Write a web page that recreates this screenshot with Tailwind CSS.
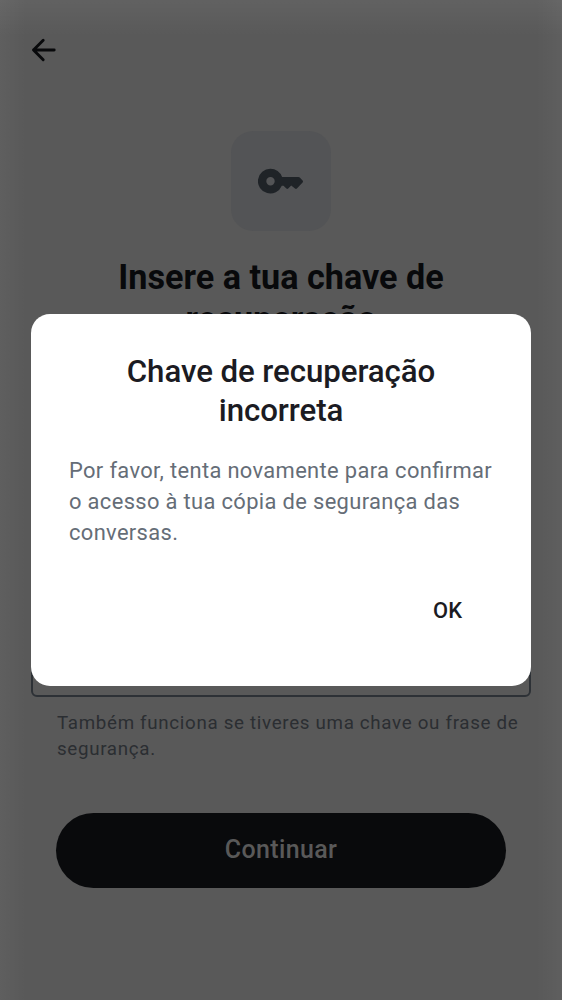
<!DOCTYPE html>
<html lang="pt">
<head>
<meta charset="utf-8">
<meta name="viewport" content="width=device-width, initial-scale=1">
<title>Chave de recuperação</title>
<script src="https://cdn.jsdelivr.net/npm/@tailwindcss/browser@4"></script>
</head>
<body class="relative h-[1000px] w-[562px] overflow-hidden bg-[#595959] bg-[linear-gradient(to_bottom,rgba(255,255,255,0.05),transparent_36px),linear-gradient(to_right,rgba(255,255,255,0.035),transparent_26px,transparent_536px,rgba(255,255,255,0.035))] font-[Roboto,sans-serif]">
<main class="flex h-full flex-col px-[31px]">
  <header class="flex h-[100px] items-center">
    <svg class="size-[26px]" viewBox="0 0 26 26" fill="none" stroke="#08090b" stroke-width="2.9" stroke-linecap="round" stroke-linejoin="round"><path d="M23.2 13H2.5M12.2 3.3L2.5 13L12.2 22.7"/></svg>
  </header>
  <div class="mt-[31px] flex size-[100px] items-center justify-center self-center rounded-[22px] bg-[#535456]">
    <svg class="h-[26px] w-[46px]" viewBox="0 0 46 26" fill="#1f2327"><path fill-rule="evenodd" d="M12.5 .7A12.4 12.4 0 1 0 23.8 17.8H25.5L28.4 20.6Q29.3 21.4 30.2 20.6L33.2 17.6L37 20.6Q38 21.4 38.9 20.5L44.6 14.4Q45.4 13.5 44.6 12.6L41.8 9.6Q41.2 9 40.4 9H24.1A12.4 12.4 0 0 0 12.5 .7ZM12.5 9A4.2 4.2 0 1 1 12.5 17.4A4.2 4.2 0 1 1 12.5 9Z"/></svg>
  </div>
  <h1 class="mt-[25px] text-center text-[34.2px] leading-[42px] font-bold text-[#08090b]">Insere a tua chave de<br>recuperação</h1>
  <div class="mt-[157px] h-[200px] shrink-0 rounded-[6px] border-2 border-[#2d3136]"></div>
  <p class="mt-[13px] pl-[26px] text-[18.75px] leading-[26px] tracking-[0.68px] text-[#2b2e32]">Também funciona se tiveres uma chave ou frase de<br>segurança.</p>
  <button class="mx-[25px] mt-[50.5px] h-[75px] shrink-0 rounded-full bg-[#090a0c] text-[25px] font-medium tracking-[0.35px] text-[#595959]">Continuar</button>
</main>
<section role="dialog" class="absolute top-[314px] left-[31px] flex h-[372px] w-[500px] flex-col rounded-[19px] bg-white px-[38px] pt-[38px]">
  <h2 class="text-center text-[31.25px] leading-[39px] font-medium tracking-[-0.08px] text-[#1b1b22]">Chave de recuperação<br>incorreta</h2>
  <p class="mt-[25px] text-[21.9px] leading-[31px] tracking-[0.35px] whitespace-nowrap text-[#656d77] [font-feature-settings:'liga']">Por favor, tenta novamente para confirmar<br>o acesso à tua cópia de segurança das<br>conversas.</p>
  <button class="mt-[46px] mr-[31px] self-end text-[21.9px] leading-[34px] font-medium text-[#1b1b22]">OK</button>
</section>
</body>
</html>
